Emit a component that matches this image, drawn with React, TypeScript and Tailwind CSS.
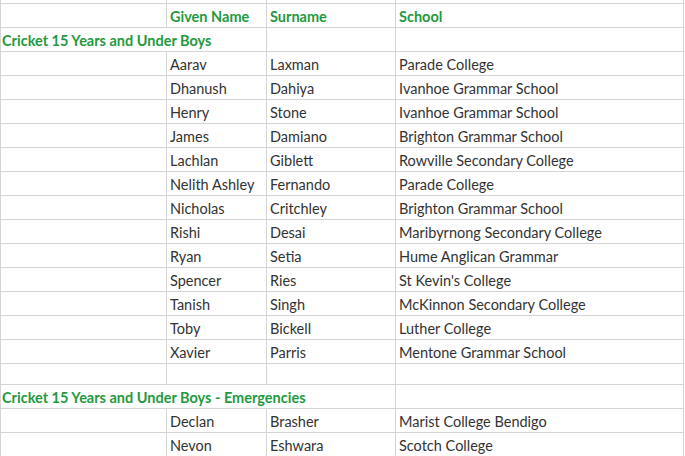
const players = [
  ["Aarav", "Laxman", "Parade College"],
  ["Dhanush", "Dahiya", "Ivanhoe Grammar School"],
  ["Henry", "Stone", "Ivanhoe Grammar School"],
  ["James", "Damiano", "Brighton Grammar School"],
  ["Lachlan", "Giblett", "Rowville Secondary College"],
  ["Nelith Ashley", "Fernando", "Parade College"],
  ["Nicholas", "Critchley", "Brighton Grammar School"],
  ["Rishi", "Desai", "Maribyrnong Secondary College"],
  ["Ryan", "Setia", "Hume Anglican Grammar"],
  ["Spencer", "Ries", "St Kevin's College"],
  ["Tanish", "Singh", "McKinnon Secondary College"],
  ["Toby", "Bickell", "Luther College"],
  ["Xavier", "Parris", "Mentone Grammar School"],
];

const emergencies = [
  ["Declan", "Brasher", "Marist College Bendigo"],
  ["Nevon", "Eshwara", "Scotch College"],
];

const cell = "border border-[#d4d4d4] px-[3px] pt-[3px] align-bottom whitespace-nowrap";
const heading = "border border-[#d4d4d4] pl-[1px] pr-[3px] pt-[3px] align-bottom whitespace-nowrap";

const PlayerRow = ({ p }: { p: string[] }) => (
  <tr className="h-[24px]">
    <td className={cell}></td>
    <td className={cell}>{p[0]}</td>
    <td className={cell}>{p[1]}</td>
    <td className={cell}>{p[2]}</td>
  </tr>
);

export default function App() {
  return (
    <div className="w-[685px] h-[456px] overflow-hidden bg-white">
      <table
        className="table-fixed border-collapse w-[683px] text-[14.5px] leading-[20px] text-[#333333]"
        style={{ fontFamily: "Lato, 'Open Sans', sans-serif" }}
      >
        <colgroup>
          <col className="w-[166px]" />
          <col className="w-[100px]" />
          <col className="w-[129px]" />
          <col className="w-[288px]" />
        </colgroup>
        <tbody>
          <tr className="h-[3px]">
            <td className="border-x border-b border-[#d4d4d4] p-0"></td>
            <td className="border-x border-b border-[#d4d4d4] p-0"></td>
            <td className="border-x border-b border-[#d4d4d4] p-0"></td>
            <td className="border-x border-b border-[#d4d4d4] p-0"></td>
          </tr>
          <tr className="h-[24px] font-bold text-[#1f9a40]">
            <td className={cell}></td>
            <td className={cell}>Given Name</td>
            <td className={cell}>Surname</td>
            <td className={cell}>School</td>
          </tr>
          <tr className="h-[24px] font-bold text-[#1f9a40]">
            <td className={heading} colSpan={2}>
              Cricket 15 Years and Under Boys
            </td>
            <td className={cell}></td>
            <td className={cell}></td>
          </tr>
          {players.map((p) => (
            <PlayerRow key={p[0]} p={p} />
          ))}
          <tr className="h-[21px]">
            <td className={cell}></td>
            <td className={cell}></td>
            <td className={cell}></td>
            <td className={cell}></td>
          </tr>
          <tr className="h-[24px] font-bold text-[#1f9a40]">
            <td className={heading} colSpan={3}>
              Cricket 15 Years and Under Boys - Emergencies
            </td>
            <td className={cell}></td>
          </tr>
          {emergencies.map((p) => (
            <PlayerRow key={p[0]} p={p} />
          ))}
        </tbody>
      </table>
    </div>
  );
}
